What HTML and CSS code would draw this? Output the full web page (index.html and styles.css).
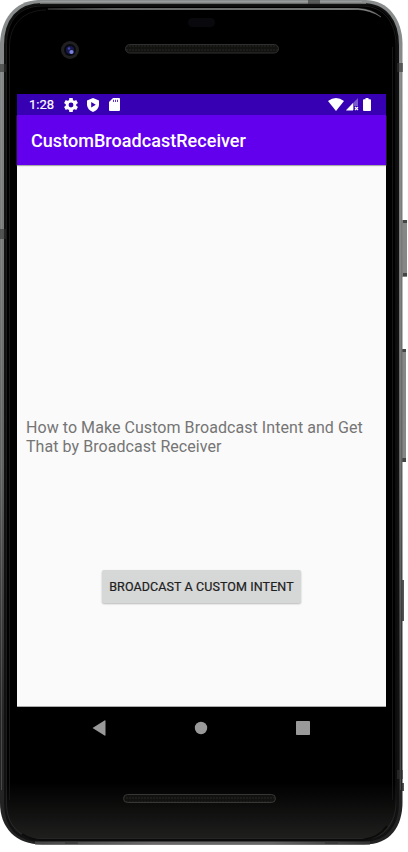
FILE: index.html
```
<!DOCTYPE html>
<html lang="en">
<head>
<meta charset="utf-8">
<title>CustomBroadcastReceiver</title>
<link rel="stylesheet" href="styles.css">
</head>
<body>
<div class="device">
  <svg class="shell" width="408" height="852" viewBox="0 0 408 852" aria-hidden="true">
    <defs>
      <linearGradient id="metal" x1="0" y1="0" x2="0" y2="1">
        <stop offset="0" stop-color="#8a8d8d"/><stop offset=".3" stop-color="#777979"/>
        <stop offset=".55" stop-color="#606161"/><stop offset=".68" stop-color="#454545"/><stop offset=".85" stop-color="#262626"/><stop offset="1" stop-color="#222"/>
      </linearGradient>
      <linearGradient id="glass" x1="0" y1="0" x2="0" y2="1">
        <stop offset="0" stop-color="#000"/><stop offset=".93" stop-color="#000"/><stop offset="1" stop-color="#20201f"/>
      </linearGradient>
      <linearGradient id="shine" x1="0" y1="0" x2="1" y2="0">
        <stop offset="0" stop-color="#333"/><stop offset=".2" stop-color="#858888"/><stop offset=".9" stop-color="#999c9c"/><stop offset="1" stop-color="#777"/>
      </linearGradient>
      <linearGradient id="base" x1="0" y1="0" x2="1" y2="0">
        <stop offset="0" stop-color="#444"/><stop offset=".35" stop-color="#696767"/><stop offset=".7" stop-color="#666"/><stop offset="1" stop-color="#333"/>
      </linearGradient>
      <pattern id="mesh" width="3" height="4" patternUnits="userSpaceOnUse"><rect width="3" height="4" fill="#121211"/><path d="M1 1v2" stroke="#262624"/></pattern>
    </defs>
    <g>
      <path d="M402 220h5v57h-5z" fill="#858787"/><path d="M403 220h4v3h-4zM403 273h4v3h-4z" fill="#444"/>
      <path d="M402 349h4v113h-4z" fill="#858787"/><path d="M402 349h4v3h-4zM402 458h4v4h-4z" fill="#444"/>
      <path d="M402 580h2v41h-2zM402 783h2v8h-2z" fill="#555"/>
    </g>
    <path d="M38 0H365C389 0 402 20 402.500 43V802C402.500 826 391 844.500 364 844.500H42C16 844.500 0 828 0 803V43C1 20 14 1 38 0Z" fill="url(#metal)"/>
    <path d="M42 4H362C387 4 398 22 398 45V802C398 826 386 841 362 841H43C17 841 5 827 5 802V45C5 20 18 4 42 4Z" fill="url(#glass)" stroke="#111" stroke-width="2"/>
    <path d="M6.500 803V45C6.500 20 20 6 42 6H362C384 6 396 23 396 45V802C396 823 384 839 362 839H43C19 839 6.500 825 6.500 803Z" fill="none" stroke="#444" stroke-opacity=".4"/>
    <path d="M9.500 800V47C9.500 25 23 10 46 10M392.500 47V800" fill="none" stroke="#161616"/>
    <path d="M1.500 60V790M400.500 60V790" stroke="#a5a7a7" stroke-opacity=".28" fill="none"/>
    <path d="M40 1.500H362M40 3.500H366" stroke="#a5a7a7" stroke-opacity=".6"/>
    <path d="M48 8.500H358Q372 9 381 17Q370 10 358 9.500H48Z" fill="url(#shine)" stroke="url(#shine)" stroke-width=".5"/>
    <path d="M35 841.500H370V844.500H35Z" fill="url(#base)"/>
    <path d="M22 834Q31 840 43 840H362Q379 838 387 826" stroke="#0b0b0b" stroke-width="2" fill="none"/>
    <path d="M0 64h6v8H0zM0 229h6v10H0zM397 63h6v9h-6zM397 770h6v9h-6zM308 0h12v4h-12zM65 841h13v3H65zM325 841h13v3h-13z" fill="#333" fill-opacity=".6"/>
    <rect x="188" y="18" width="27" height="9" rx="4.500" fill="#09090d"/>
    <circle cx="70" cy="50" r="9" fill="#202020"/><circle cx="70" cy="50" r="6" fill="#080810"/>
    <circle cx="70" cy="50" r="4" fill="#191a49"/><circle cx="71.500" cy="52" r="2.100" fill="#7b82e0"/><circle cx="69" cy="48.500" r="1.200" fill="#454bb0"/>
    <rect x="125.500" y="44.500" width="153" height="8.500" rx="4.250" fill="url(#mesh)" stroke="#303030"/>
    <rect x="123.500" y="794.500" width="152" height="8" rx="4" fill="url(#mesh)" stroke="#363634"/>
  </svg>
  <main class="screen">
    <header class="status">
      <span class="time">1:28</span>
      <svg class="gear" width="14" height="14" viewBox="2 2 20 20"><path fill="#fff" d="M19.430 12.980c.04-.32.07-.64.07-.98s-.03-.66-.07-.98l2.110-1.650c.19-.15.24-.42.12-.64l-2-3.460c-.12-.22-.39-.3-.61-.22l-2.490 1c-.52-.4-1.080-.73-1.690-.98l-.38-2.650A.488.488 0 0 0 14 2h-4c-.25 0-.46.18-.49.42l-.38 2.650c-.61.25-1.170.59-1.690.98l-2.490-1c-.23-.09-.49 0-.61.22l-2 3.460c-.13.22-.07.49.12.64l2.110 1.650c-.04.32-.07.65-.07.98s.03.66.07.98l-2.110 1.650c-.19.15-.24.42-.12.64l2 3.460c.12.22.39.3.61.22l2.490-1c.52.4 1.080.73 1.690.98l.38 2.650c.03.24.24.42.49.42h4c.25 0 .46-.18.49-.42l.38-2.650c.61-.25 1.170-.59 1.690-.98l2.490 1c.23.09.49 0 .61-.22l2-3.460c.12-.22.07-.49-.12-.64zM12 15.500a3.500 3.500 0 1 1 0-7 3.500 3.500 0 0 1 0 7z"/></svg>
      <svg class="shield" width="12" height="14" viewBox="0 0 12 14"><path fill="#fff" fill-rule="evenodd" d="M6 0 12 2.400V7Q11.500 12 6 14 .5 12 0 7V2.400ZM4.200 4V9.600L8.800 6.800Z"/></svg>
      <svg class="sd" width="11" height="13" viewBox="0 0 11 13"><path fill="#fff" fill-rule="evenodd" d="M4 0H10Q11 0 11 1V12Q11 13 10 13H1Q0 13 0 12V4ZM4 1.700V4H4.800V1.700ZM6.100 1.700V4H6.900V1.700ZM8.200 1.700V4H9V1.700Z"/></svg>
      <svg class="wifi" width="16" height="13" viewBox="0 0 16 13"><path fill="#fff" d="M0 3Q8-3 16 3L8 13Z"/></svg>
      <svg class="signal" width="13" height="13" viewBox="0 0 13 13"><path fill="#fff" fill-opacity=".35" d="M12 0V8H8V12H0Z"/><path fill="#fff" d="M7 5V12.500H0Z"/><path d="m9 9 3 3m0-3-3 3" stroke="#fff" stroke-width="1.200"/></svg>
      <svg class="battery" width="8" height="13" viewBox="0 0 8 13"><path fill="#fff" d="M2.500 0h3v1.300H7Q8 1.300 8 2.300V12Q8 13 7 13H1Q0 13 0 12V2.300Q0 1.300 1 1.300H2.500Z"/></svg>
    </header>
    <div class="appbar"><h1>CustomBroadcastReceiver</h1></div>
    <section class="content">
      <p>How to Make Custom Broadcast Intent and Get<br>That by Broadcast Receiver</p>
      <button type="button">BROADCAST A CUSTOM INTENT</button>
    </section>
  </main>
  <nav class="navigation">
    <svg width="14" height="16" viewBox="0 0 14 16"><path fill="#999" d="M.5 8 12.500 .5Q13.500 0 13.500 1V15Q13.500 16 12.500 15.500Z"/></svg>
    <svg width="14" height="14" viewBox="0 0 14 14"><circle cx="7" cy="7" r="6.200" fill="#999"/></svg>
    <svg width="14" height="14" viewBox="0 0 14 14"><rect width="14" height="14" rx=".7" fill="#999"/></svg>
  </nav>
</div>
</body>
</html>
```
FILE: styles.css
```
* { box-sizing: border-box; }
body { margin: 0; background: #fff; font-family: Roboto, sans-serif; }
.device { position: relative; width: 408px; height: 852px; padding: 94px 22px 0 17px; overflow: hidden; }
.shell { position: absolute; inset: 0; }
.screen { position: relative; display: flex; flex-direction: column; width: 369px; height: 613px; background: #fafafa; border-bottom: 1px solid #aaa; }
.status { display: flex; align-items: center; height: 21px; padding: 0 15px 0 12px; background: #3700b3; color: #fff; }
.time { width: 35px; font-size: 13px; font-weight: 400; line-height: 21px; -webkit-text-stroke: .2px #fff; }
.shield { margin-left: 9px; }
.sd { margin-left: 10px; }
.wifi { margin-left: auto; }
.signal { margin-left: 2px; }
.battery { margin-left: 4px; }
.appbar { display: flex; align-items: center; height: 50px; padding: 2px 14px 0; background: #6200ee; color: #fff; box-shadow: 0 1px 1px #aaa; }
h1 { margin: 0; font-size: 18px; font-weight: 500; line-height: 24px; letter-spacing: .04px; }
.content { display: flex; flex-direction: column; padding-top: 253px; }
p { margin: 0 0 0 9px; color: #757575; font-size: 16px; line-height: 19px; letter-spacing: .06px; white-space: nowrap; }
button { width: 199px; height: 33px; margin: 114px 0 0 85px; padding: 0; border: 0; border-radius: 2px; background: #d6d7d7; box-shadow: 0 1px 2px #0004; color: #202020; font: 400 12.500px Roboto, sans-serif; letter-spacing: .1px; -webkit-text-stroke: .2px #202020; }
.navigation { position: relative; display: flex; align-items: center; justify-content: space-between; width: 218px; height: 42px; margin-left: 75px; }
```
